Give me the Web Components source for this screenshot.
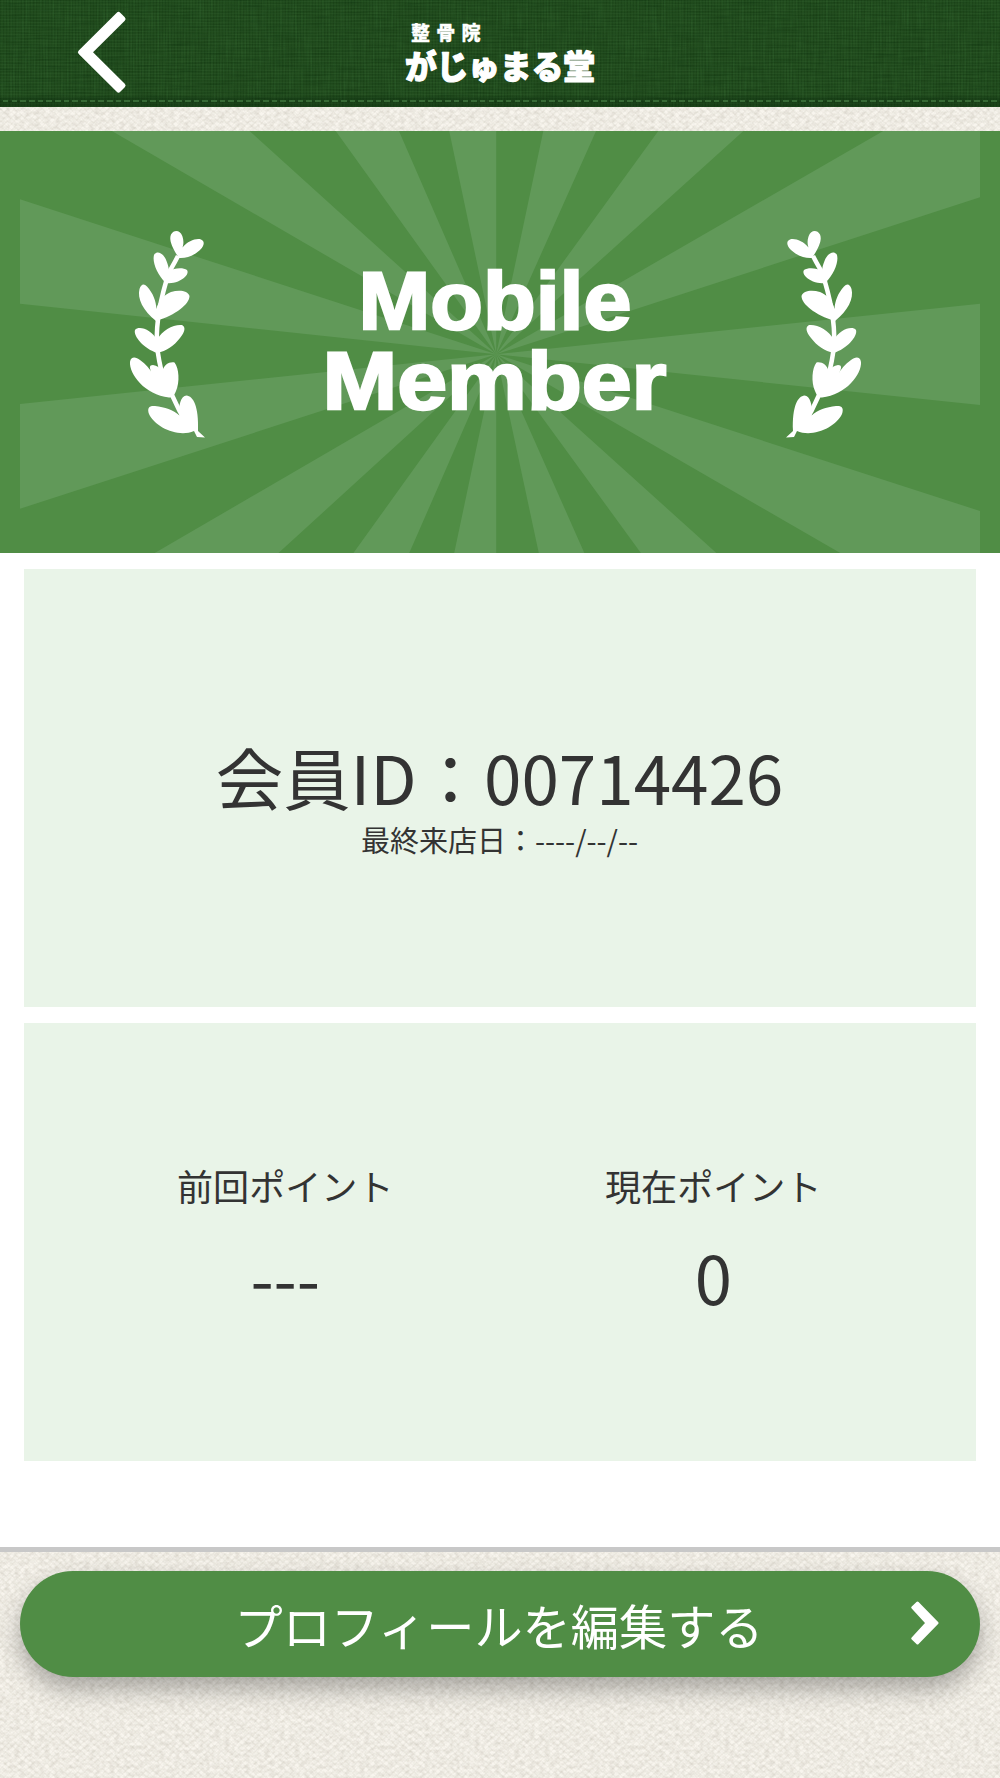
<!DOCTYPE html>
<html lang="ja">
<head>
<meta charset="UTF-8">
<meta name="viewport" content="width=device-width, initial-scale=1.0">
<title>がじゅまる堂</title>
<style>
    body {
        margin: 0;
        background: #f0ede6;
        color: #333;
        font-family: "Noto Sans CJK JP", sans-serif;
    }
</style>
</head>
<body>
<member-app>
    <app-header slot="header" sub="整骨院" name="がじゅまる堂"></app-header>
    <member-banner></member-banner>
    <info-card>
        <member-id number="00714426" visited="----/--/--"></member-id>
    </info-card>
    <info-card>
        <point-item label="前回ポイント">---</point-item>
        <point-item label="現在ポイント">0</point-item>
    </info-card>
    <edit-button slot="footer">プロフィールを編集する</edit-button>
</member-app>

<script>
// woven cloth: noise image laid over a flat colour
function cloth(freq, seed, matrix, size) {
    const svg = `<svg xmlns='http://www.w3.org/2000/svg' width='${size}' height='${size}'><filter id='n' x='0' y='0' width='1' height='1' color-interpolation-filters='sRGB'><feTurbulence type='fractalNoise' baseFrequency='${freq}' numOctaves='2' seed='${seed}' stitchTiles='stitch'/><feColorMatrix values='${matrix}'/></filter><rect width='${size}' height='${size}' filter='url(#n)'/></svg>`;
    return `url("data:image/svg+xml,${encodeURIComponent(svg)}")`;
}

const LINEN = cloth("0.2 0.26", 4, "0 0 0 0 .5  0 0 0 0 .48  0 0 0 0 .41  .34 0 0 0 -.11", 250);
const DENIM_X = cloth("0.03 0.45", 7, "0 0 0 0 .02  0 0 0 0 .16  0 0 0 0 .03  .6 0 0 0 -.25", 400);
const DENIM_Y = cloth("0.45 0.03", 9, "0 0 0 0 .25  0 0 0 0 .5  0 0 0 0 .25  .45 0 0 0 -.19", 400);

class MemberApp extends HTMLElement {
    constructor() {
        super();
        this.attachShadow({ mode: "open" });
        this.shadowRoot.innerHTML = `
            <style>
                :host {
                    display: flex;
                    flex-direction: column;
                    box-sizing: border-box;
                    height: 1778px;
                    overflow: hidden;
                    background:
                        repeating-linear-gradient(40deg, rgba(120, 112, 90, .04) 0 1.5px, transparent 1.5px 4.5px),
                        repeating-linear-gradient(-42deg, rgba(120, 112, 90, .04) 0 1.5px, transparent 1.5px 4.5px),
                        ${LINEN}, #f8f5ee;
                }
                main {
                    display: flex;
                    flex-direction: column;
                    gap: 16px;
                    flex: none;
                    box-sizing: border-box;
                    height: 1421.5px;
                    margin-top: 24px;
                    background: #fff;
                    border-bottom: 5px solid #c8c8c8;
                }
                footer {
                    padding: 19px 20px;
                }
            </style>
            <slot name="header"></slot>
            <main><slot></slot></main>
            <footer><slot name="footer"></slot></footer>
        `;
    }
}

class AppHeader extends HTMLElement {
    constructor() {
        super();
        this.attachShadow({ mode: "open" });
        this.shadowRoot.innerHTML = `
            <style>
                :host {
                    display: block;
                    flex: none;
                    height: 106.5px;
                    color: #fff;
                    background:
                        repeating-linear-gradient(90deg, #376a35 0 5.5px, transparent 5.5px 8.67px) 3px 100px / 100% 2px no-repeat,
                        linear-gradient(transparent 96px, rgba(8, 40, 10, .3) 98px),
                        repeating-linear-gradient(0deg, rgba(60, 110, 60, .16) 0 1px, transparent 1px 3px),
                        repeating-linear-gradient(90deg, rgba(10, 45, 10, .2) 0 1px, transparent 1px 3px),
                        ${DENIM_X}, ${DENIM_Y}, #214b1d;
                }
                svg {
                    display: block;
                }
                text {
                    font-family: "Noto Sans CJK JP", sans-serif;
                    font-weight: 900;
                    fill: #fff;
                    stroke: #fff;
                    stroke-linejoin: round;
                }
            </style>
            <svg width="1000" height="106" viewBox="0 0 1000 106">
                <path d="M118.5 14.5 80.5 52.2 118.5 90 123 85.5 89.5 52.2 123 19Z" fill="#fff" stroke="#fff" stroke-width="5" stroke-linejoin="round"/>
                <text class="sub" x="411" y="39.5" font-size="19" textLength="69.5" lengthAdjust="spacing" stroke-width=".3"></text>
                <text class="name" x="405" y="78.5" font-size="33" textLength="190" lengthAdjust="spacingAndGlyphs" stroke-width="1.2"></text>
            </svg>
        `;
    }

    connectedCallback() {
        this.shadowRoot.querySelector(".sub").textContent = this.getAttribute("sub");
        this.shadowRoot.querySelector(".name").textContent = this.getAttribute("name");
    }
}

class MemberBanner extends HTMLElement {
    constructor() {
        super();
        this.attachShadow({ mode: "open" });
        this.shadowRoot.innerHTML = `
            <style>
                :host {
                    display: block;
                    flex: none;
                    height: 422.5px;
                    background: #508d45;
                }
                svg {
                    display: block;
                }
                text {
                    font: bold 81px "Liberation Sans", Arial, sans-serif;
                    fill: #fff;
                    stroke: #fff;
                    stroke-width: 2.4;
                }
            </style>
            <svg width="1000" height="422.5" viewBox="0 131 1000 422.5">
                <defs>
                    <g id="laurel" fill="#fff">
                        <path d="M179 258C171 246 169 239 171 234.5C174 229.5 180 230 182.3 236C184 241 183.5 245 182.5 247.5C188 241 196 238 201 239.5C205 241 204.5 246 200 250C194 255.5 187 258.5 179 258Z"/>
                        <path d="M166 283C156 274 151.5 259 154.5 254C158 250 164 254 166.5 261C168.5 266 169 269 168.6 271C174 268 183 267 187 270C189.5 274 184 279 178 281.5C174 283 170 283.5 166 283Z"/>
                        <path d="M156 321C143 311 137 298 139.5 289C141 284 144 283 147 286.5C153 293 156 301 156.5 309C158 301 164 295 171 292C179 289.5 188 290.5 189.5 296C189.5 304 176 315 156 321Z"/>
                        <path d="M157.5 353C144 349 133 336 135 330C139 325 152 330 157 340C162 330 174 324 182 325C186 327 185 332 180 338C174 346 166 351 157.5 353Z"/>
                        <path d="M169 397.5C145 395 129 374 130 362C131 356 136 357 140 360C146 364 150 369 152.5 374C149 368 149 365 153 365C157 365.5 160 368 162.5 371C164 365 169 361.5 174.5 362.5C179 368 180 382 176 391C174 396 172 397.5 169 397.5Z"/>
                        <path d="M194 431C178 438 155 427 149 414C147 408 149 405.5 155 406C165 407 173 410 179.5 415.5C178 406 181 395.5 186.5 395.5C193 396 199 406 198 431L205 437.5L197 437Z"/>
                        <path d="M178 256C173 266 170 270 167.5 275L166 282C159 306 155 328 157.5 350C159 360 160 369 164 378L179.5 411L188 425" fill="none" stroke="#fff" stroke-width="4.5"/>
                    </g>
                    <clipPath id="frame"><rect x="20" y="130" width="960" height="424"/></clipPath>
                </defs>
                <path clip-path="url(#frame)" fill="#619959" d="
                    M496.2 354.3 111 130.5H249Z
                    M496.2 354.3 335 130H398.5Z
                    M496.2 354.3 449 130H496.2Z
                    M496.2 354.3 543.5 130H596.5Z
                    M496.2 354.3 659 130H744.5Z
                    M496.2 354.3 885 130H980V197.3Z
                    M496.2 354.3 20 199.3V303.7Z
                    M496.2 354.3 20 404V508.7Z
                    M496.2 354.3 980 303.7V405Z
                    M496.2 354.3 980 511V554H842Z
                    M496.2 354.3 153 554H277.4Z
                    M496.2 354.3 352.7 554H408.8Z
                    M496.2 354.3 454 554H496.2Z
                    M496.2 354.3 539 554H584.8Z
                    M496.2 354.3 641.6 554H717.5Z"/>
                <use href="#laurel"/>
                <use href="#laurel" transform="matrix(-1 0 0 1 991 0)"/>
                <text x="358.5" y="329.3" textLength="273" lengthAdjust="spacingAndGlyphs">Mobile</text>
                <text x="322.5" y="409" textLength="344" lengthAdjust="spacingAndGlyphs">Member</text>
            </svg>
        `;
    }
}

class InfoCard extends HTMLElement {
    constructor() {
        super();
        this.attachShadow({ mode: "open" });
        this.shadowRoot.innerHTML = `
            <style>
                :host {
                    display: flex;
                    flex: none;
                    align-items: center;
                    justify-content: center;
                    height: 438px;
                    margin: 0 24px;
                    background: #e9f4e8;
                }
                ::slotted(point-item) {
                    width: 428px;
                }
            </style>
            <slot></slot>
        `;
    }
}

class MemberId extends HTMLElement {
    constructor() {
        super();
        this.attachShadow({ mode: "open" });
        this.shadowRoot.innerHTML = `
            <style>
                :host {
                    display: block;
                    text-align: center;
                    white-space: nowrap;
                    padding: 28px 1px 0 0;
                }
                .id {
                    font-size: 67.4px;
                    line-height: 74px;
                }
                .visited {
                    font-size: 29px;
                    line-height: 53px;
                }
            </style>
            <div class="id"></div>
            <div class="visited"></div>
        `;
    }

    connectedCallback() {
        this.shadowRoot.querySelector(".id").textContent = `会員ID：${this.getAttribute("number")}`;
        this.shadowRoot.querySelector(".visited").textContent = `最終来店日：${this.getAttribute("visited")}`;
    }
}

class PointItem extends HTMLElement {
    constructor() {
        super();
        this.attachShadow({ mode: "open" });
        this.shadowRoot.innerHTML = `
            <style>
                :host {
                    display: block;
                    box-sizing: border-box;
                    padding-right: 1.5px;
                    text-align: center;
                }
                .label {
                    font-size: 36.1px;
                    line-height: 54px;
                }
                .value {
                    margin-top: 14px;
                    font-size: 67px;
                    line-height: 100px;
                }
            </style>
            <div class="label"></div>
            <div class="value"><slot></slot></div>
        `;
    }

    connectedCallback() {
        this.shadowRoot.querySelector(".label").textContent = this.getAttribute("label");
    }
}

class EditButton extends HTMLElement {
    constructor() {
        super();
        this.attachShadow({ mode: "open" });
        this.shadowRoot.innerHTML = `
            <style>
                :host {
                    display: block;
                }
                button {
                    position: relative;
                    display: flex;
                    align-items: center;
                    justify-content: center;
                    width: 100%;
                    height: 106px;
                    padding: 0;
                    border: none;
                    border-radius: 53px;
                    background: #508d45;
                    box-shadow: 0 12px 24px rgba(0, 0, 0, .3);
                    color: #fff;
                    font: 48.2px "Noto Sans CJK JP", sans-serif;
                    cursor: pointer;
                }
                span {
                    padding: 0 2px 0 0;
                }
                svg {
                    position: absolute;
                    right: 41px;
                    top: 30px;
                }
            </style>
            <button type="button">
                <span><slot></slot></span>
                <svg width="28" height="44" viewBox="0 0 28 44">
                    <path d="M6.5 2 26 22 6.5 42 1.8 37.5 16 22 1.8 6.5Z" fill="#fff" stroke="#fff" stroke-width="3" stroke-linejoin="round"/>
                </svg>
            </button>
        `;
    }
}

customElements.define("member-app", MemberApp);
customElements.define("app-header", AppHeader);
customElements.define("member-banner", MemberBanner);
customElements.define("info-card", InfoCard);
customElements.define("member-id", MemberId);
customElements.define("point-item", PointItem);
customElements.define("edit-button", EditButton);
</script>
</body>
</html>
